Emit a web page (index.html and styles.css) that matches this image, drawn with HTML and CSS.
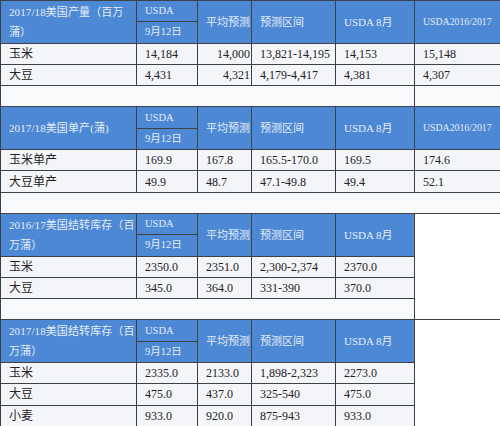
FILE: index.html
```html
<!DOCTYPE html>
<html lang="zh">
<head>
<meta charset="utf-8">
<title>USDA 预测</title>
<link rel="stylesheet" href="styles.css">
</head>
<body>
<table class="sheet">
  <colgroup>
    <col class="w1"><col class="w2"><col class="w3"><col class="w4"><col class="w5"><col class="w6">
  </colgroup>
  <tbody>
    <tr class="hr">
      <th rowspan="2" class="title">2017/18美国产量（百万<br>蒲）</th>
      <th class="sub">USDA</th>
      <th rowspan="2">平均预测</th>
      <th rowspan="2">预测区间</th>
      <th rowspan="2">USDA 8月</th>
      <th rowspan="2" class="prev">USDA2016/2017</th>
    </tr>
    <tr class="hr"><th class="sub">9月12日</th></tr>
    <tr><td>玉米</td><td>14,184</td><td class="r">14,000</td><td>13,821-14,195</td><td>14,153</td><td>15,148</td></tr>
    <tr><td>大豆</td><td>4,431</td><td class="r">4,321</td><td>4,179-4,417</td><td>4,381</td><td>4,307</td></tr>
    <tr class="gap"><td colspan="5"></td><td></td></tr>

    <tr class="hr">
      <th rowspan="2" class="title">2017/18美国单产(蒲)</th>
      <th class="sub">USDA</th>
      <th rowspan="2">平均预测</th>
      <th rowspan="2">预测区间</th>
      <th rowspan="2">USDA 8月</th>
      <th rowspan="2" class="prev">USDA2016/2017</th>
    </tr>
    <tr class="hr"><th class="sub">9月12日</th></tr>
    <tr><td>玉米单产</td><td>169.9</td><td>167.8</td><td>165.5-170.0</td><td>169.5</td><td>174.6</td></tr>
    <tr><td>大豆单产</td><td>49.9</td><td>48.7</td><td>47.1-49.8</td><td>49.4</td><td>52.1</td></tr>
    <tr class="gap"><td colspan="6"></td></tr>

    <tr class="hr">
      <th rowspan="2" class="title">2016/17美国结转库存（百<br>万蒲）</th>
      <th class="sub">USDA</th>
      <th rowspan="2">平均预测</th>
      <th rowspan="2">预测区间</th>
      <th rowspan="2">USDA 8月</th>
      <td rowspan="5" class="blank"></td>
    </tr>
    <tr class="hr"><th class="sub">9月12日</th></tr>
    <tr><td>玉米</td><td>2350.0</td><td>2351.0</td><td>2,300-2,374</td><td>2370.0</td></tr>
    <tr><td>大豆</td><td>345.0</td><td>364.0</td><td>331-390</td><td>370.0</td></tr>
    <tr class="gap"><td colspan="5"></td></tr>

    <tr class="hr">
      <th rowspan="2" class="title">2017/18美国结转库存（百<br>万蒲）</th>
      <th class="sub">USDA</th>
      <th rowspan="2">平均预测</th>
      <th rowspan="2">预测区间</th>
      <th rowspan="2">USDA 8月</th>
      <td rowspan="5" class="blank"></td>
    </tr>
    <tr class="hr"><th class="sub">9月12日</th></tr>
    <tr><td>玉米</td><td>2335.0</td><td>2133.0</td><td>1,898-2,323</td><td>2273.0</td></tr>
    <tr><td>大豆</td><td>475.0</td><td>437.0</td><td>325-540</td><td>475.0</td></tr>
    <tr><td>小麦</td><td>933.0</td><td>920.0</td><td>875-943</td><td>933.0</td></tr>
  </tbody>
</table>
</body>
</html>
```

FILE: styles.css
```css
html, body {
  margin: 0;
  padding: 0;
  background: #ffffff;
  overflow: hidden;
}

.sheet {
  border-collapse: collapse;
  table-layout: fixed;
  width: 506px;
  font-family: "Liberation Serif", "Noto Sans CJK SC", serif;
  font-size: 12px;
  color: #222;
}

.w1 { width: 136px; }
.w2 { width: 61px; }
.w3 { width: 54px; }
.w4 { width: 84px; }
.w5 { width: 79px; }
.w6 { width: 92px; }

.sheet tr { height: 21.3px; }

.sheet th,
.sheet td {
  border: 1px solid #3e4146;
  padding: 0 0 0 8px;
  text-align: left;
  vertical-align: middle;
  white-space: nowrap;
  overflow: hidden;
  line-height: 20px;
}

.sheet td {
  background: #f4f5f9;
}

.sheet th {
  background: #4c88d3;
  color: #e4edf9;
  font-weight: normal;
  font-size: 11px;
}

.sheet th.title {
  letter-spacing: 0.1px;
}

.sheet th.sub {
  font-size: 10.5px;
}

.sheet th.prev {
  font-size: 9.8px;
}

.sheet td.r {
  text-align: right;
  padding: 0 1px 0 0;
}

.sheet tr.gap td {
  background: #f8f9fb;
}

.sheet td.blank {
  background: #ffffff;
}
```
